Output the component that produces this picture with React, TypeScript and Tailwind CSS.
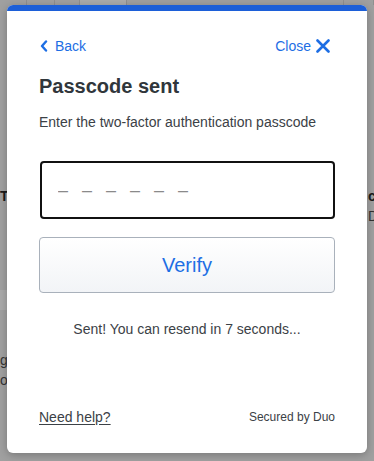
import { useState } from 'react'

function ChevronLeft() {
  return (
    <svg width="8" height="12" viewBox="0 0 8 12" fill="none" className="shrink-0">
      <polyline points="6,1.5 2,6 6,10.5" stroke="currentColor" strokeWidth="2.4" strokeLinecap="round" strokeLinejoin="round" />
    </svg>
  )
}

function CloseX() {
  return (
    <svg width="14" height="14" viewBox="0 0 14 14" fill="none" className="shrink-0">
      <path d="M1.5 1.5 L12.5 12.5 M12.5 1.5 L1.5 12.5" stroke="currentColor" strokeWidth="2.6" strokeLinecap="round" />
    </svg>
  )
}

export default function App() {
  const [code, setCode] = useState('')

  return (
    <div
      className="relative h-[461px] w-[374px] overflow-hidden bg-[#a0a0a0] pt-[5px] pl-[7px]"
      style={{ fontFamily: '"Liberation Sans", Arial, sans-serif' }}
    >
      {/* dimmed page behind the dialog */}
      <div className="absolute inset-x-0 top-0 flex h-[5px]">
        <div className="w-[27px] border-r border-[#8f8f8f]" />
        <div className="w-[28px] border-r border-[#8f8f8f]" />
        <div className="w-[25px] border-r border-[#8f8f8f]" />
        <div className="w-[47px] bg-[#ababab] border-r border-[#8f8f8f]" />
        <div className="flex-1 border-r border-[#8f8f8f]" />
        <div className="w-[30px] border-r border-[#8f8f8f]" />
      </div>
      <div className="absolute left-0 top-[186px] text-[14px] font-bold text-[#1a1a1a]">T</div>
      <div className="absolute right-0 top-[186px] w-[6px] overflow-hidden text-[14px] font-bold text-[#1a1a1a]">ce</div>
      <div className="absolute right-0 top-[206px] w-[6px] overflow-hidden text-[14px] text-[#333]">D</div>
      <div className="absolute left-0 top-[290px] h-[20px] w-[7px] bg-[#aaaaaa]" />
      <div className="absolute left-0 top-[350px] w-[7px] overflow-hidden text-[14px] leading-[20px] text-[#333]">gi<br />oo</div>

      {/* dialog */}
      <div className="relative flex h-[448px] w-[360px] flex-col overflow-hidden rounded-[6px] bg-white shadow-[0_2px_8px_rgba(0,0,0,0.25)]">
        <div className="h-[6px] shrink-0 bg-[#1c5fd8]" />

        <div className="flex flex-1 flex-col px-[32px]">
          <div className="mt-[25px] flex h-[20px] items-center justify-between text-[14px] leading-[20px] text-[#1d6ee4]">
            <button className="flex items-center gap-[7px] pl-[1px]">
              <ChevronLeft />
              <span>Back</span>
            </button>
            <button className="flex items-center gap-[5px] pr-[5px]">
              <span>Close</span>
              <CloseX />
            </button>
          </div>

          <h1 className="mt-[18px] text-[20px] font-bold leading-[24px] text-[#30363b]">Passcode sent</h1>

          <p className="mt-[14px] text-[14px] leading-[20px] text-[#3b4146]">
            Enter the two-factor authentication passcode
          </p>

          <input
            value={code}
            onChange={(e) => setCode(e.target.value)}
            placeholder="– – – – – –"
            className="mt-[29px] ml-[1px] h-[58px] w-[295px] rounded-[4px] border-2 border-[#111] bg-white px-[16px] text-[18px] tracking-[4.5px] text-[#222] outline-none placeholder:text-[#8a8a8a]"
          />

          <button className="mt-[18px] h-[56px] w-[296px] rounded-[4px] border border-[#a9b1bb] bg-gradient-to-b from-white to-[#f2f4f7] text-[20px] text-[#1d6ee4]">
            Verify
          </button>

          <p className="mt-[26px] text-center text-[14px] leading-[20px] text-[#3b4146]">
            Sent! You can resend in 7 seconds...
          </p>

          <div className="mt-auto mb-[26px] flex h-[20px] items-center justify-between">
            <a href="#" className="text-[14px] leading-[20px] text-[#3b4146] underline underline-offset-2">
              Need help?
            </a>
            <span className="text-[12px] text-[#3b4146]">Secured by Duo</span>
          </div>
        </div>
      </div>
    </div>
  )
}
